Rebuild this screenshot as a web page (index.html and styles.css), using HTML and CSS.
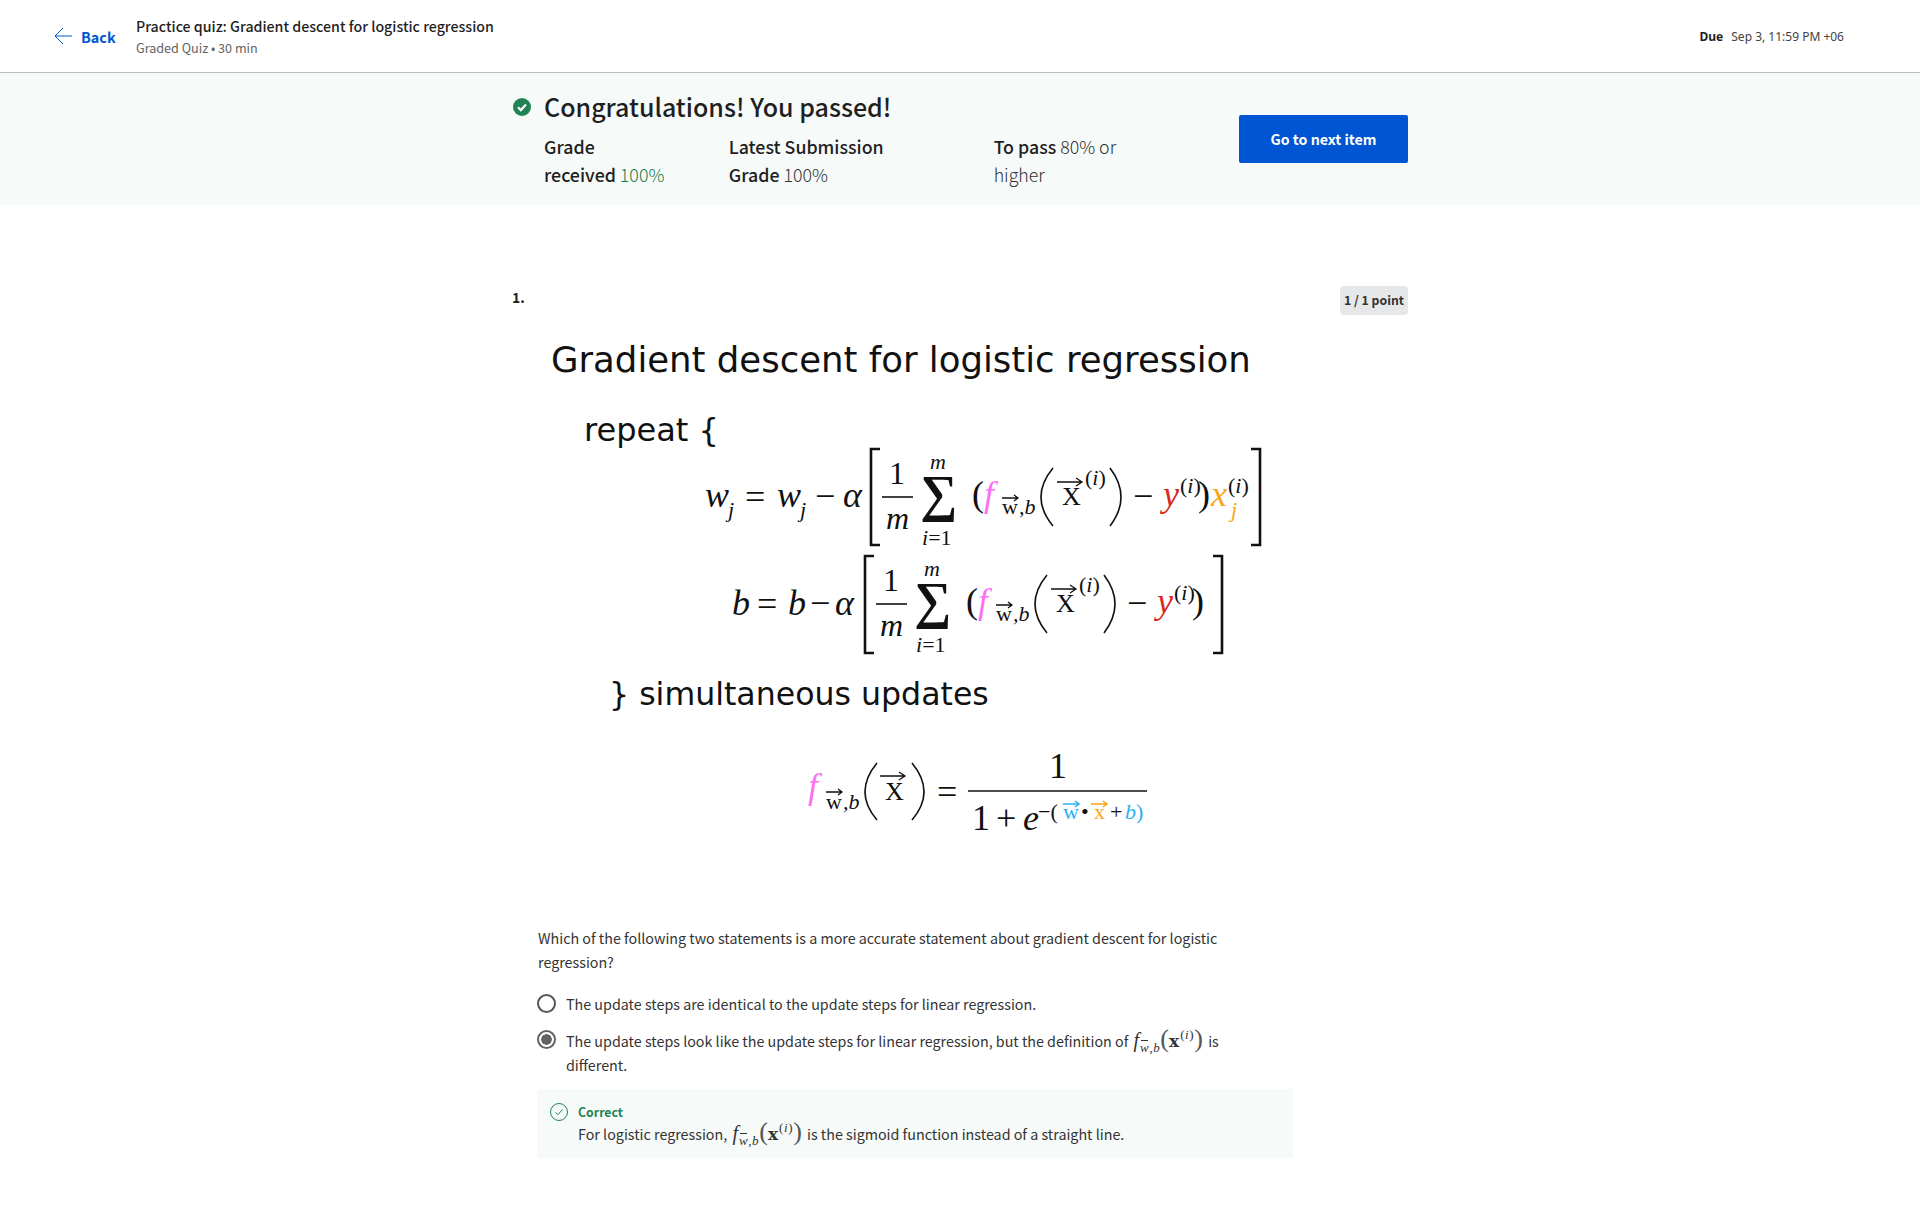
FILE: index.html
```html
<!DOCTYPE html>
<html lang="en">
<head>
<meta charset="utf-8">
<title>Practice quiz: Gradient descent for logistic regression</title>
<link rel="stylesheet" href="styles.css">
</head>
<body>
<header class="topbar">
  <a class="back">
    <svg class="back-icon" viewBox="0 0 18 18" width="18" height="18"><path d="M9 1 1 9l8 8M1 9h17"/></svg>
    <span>Back</span>
  </a>
  <div class="title-block">
    <div class="title">Practice quiz: Gradient descent for logistic regression</div>
    <div class="subtitle">Graded Quiz • 30 min</div>
  </div>
  <div class="due"><b>Due</b><span>Sep 3, 11:59 PM +06</span></div>
</header>

<section class="band">
  <div class="band-inner">
    <div class="result">
      <h1 class="result-head">
        <svg class="ok-icon" viewBox="0 0 18 18" width="18" height="18"><circle cx="9" cy="9" r="9" fill="#1f8354"/><path d="M5 9.3l2.8 2.8L13 6.6" fill="none" stroke="#fff" stroke-width="2.2"/></svg>
        Congratulations! You passed!
      </h1>
      <div class="stats">
        <div class="stat s1"><b>Grade received</b> <span class="green">100%</span></div>
        <div class="stat s2"><b>Latest Submission Grade</b> 100%</div>
        <div class="stat s3"><b>To pass</b> 80% or higher</div>
      </div>
    </div>
    <a class="next-btn">Go to next item</a>
  </div>
</section>

<main class="quiz">
  <div class="q-head">
    <span class="q-num">1.</span>
    <span class="q-points">1 / 1 point</span>
  </div>

  <svg class="figure" viewBox="512 330 896 570" width="896" height="570">
    <text class="vd t1" x="551" y="372">Gradient descent for logistic regression</text>
    <text class="vd t2" x="584" y="441">repeat {</text>

    <g class="math">
      <text class="it" x="705" y="507">w</text><text class="it sm" x="728" y="517">j</text>
      <text x="745" y="509">=</text>
      <text class="it" x="777" y="507">w</text><text class="it sm" x="800" y="517">j</text>
      <text x="815" y="508">−</text>
      <text class="it" x="843" y="507">α</text>
      <path class="br" d="M880 449h-9v96h9M1251 449h9v96h-9"/>
      <text class="fr" x="889" y="484">1</text>
      <path class="ln" d="M882 497h31"/>
      <text class="it fr" x="886" y="529">m</text>
      <text class="sm it" x="930" y="469">m</text>
      <text class="sig" x="920" y="511" textLength="37" lengthAdjust="spacingAndGlyphs">∑</text>
      <text class="sm" x="922" y="545"><tspan class="it">i</tspan>=1</text>
      <text x="972" y="506">(</text>
      <text class="it pink" x="984" y="506">f</text>
      <text class="sm" x="1002" y="514">w<tspan class="it" dx="1">,b</tspan></text>
      <path class="ar" d="M1002 498h16m-4-3 4 3-4 3"/>
      <path class="pa" d="M1053 468q-24 29 0 58M1110 468q22 29 0 58"/>
      <text class="rm" x="1062" y="505">X</text>
      <path class="ar" d="M1057 482h25m-6-4 6 4-6 4"/>
      <text class="sm" x="1085" y="485">(<tspan class="it">i</tspan>)</text>
      <text x="1133" y="508">−</text>
      <text class="it red" x="1163" y="506">y</text>
      <text class="sm" x="1180" y="493">(<tspan class="it">i</tspan>)</text>
      <text x="1198" y="506">)</text>
      <text class="it orange" x="1211" y="506">x</text>
      <text class="sm" x="1228" y="493">(<tspan class="it">i</tspan>)</text>
      <text class="it sm orange" x="1231" y="517">j</text>
    </g>

    <g class="math">
      <text class="it" x="732" y="615">b</text>
      <text x="757" y="616">=</text>
      <text class="it" x="788" y="615">b</text>
      <text x="810" y="615">−</text>
      <text class="it" x="835" y="615">α</text>
      <path class="br" d="M874 556h-9v97h9M1213 556h9v97h-9"/>
      <text class="fr" x="883" y="591">1</text>
      <path class="ln" d="M876 604h31"/>
      <text class="it fr" x="880" y="636">m</text>
      <text class="sm it" x="924" y="576">m</text>
      <text class="sig" x="914" y="618" textLength="37" lengthAdjust="spacingAndGlyphs">∑</text>
      <text class="sm" x="916" y="652"><tspan class="it">i</tspan>=1</text>
      <text x="966" y="613">(</text>
      <text class="it pink" x="978" y="613">f</text>
      <text class="sm" x="996" y="621">w<tspan class="it" dx="1">,b</tspan></text>
      <path class="ar" d="M996 605h16m-4-3 4 3-4 3"/>
      <path class="pa" d="M1047 575q-24 29 0 58M1104 575q22 29 0 58"/>
      <text class="rm" x="1056" y="612">X</text>
      <path class="ar" d="M1051 589h25m-6-4 6 4-6 4"/>
      <text class="sm" x="1079" y="592">(<tspan class="it">i</tspan>)</text>
      <text x="1127" y="615">−</text>
      <text class="it red" x="1157" y="613">y</text>
      <text class="sm" x="1174" y="600">(<tspan class="it">i</tspan>)</text>
      <text x="1192" y="613">)</text>
    </g>

    <text class="vd t3" x="609" y="704.5">} simultaneous updates</text>

    <g class="math">
      <text class="it pink" x="808" y="798">f</text>
      <text class="sm" x="826" y="809">w<tspan class="it" dx="1">,b</tspan></text>
      <path class="ar" d="M826 792h16m-4-3 4 3-4 3"/>
      <path class="pa" d="M877 763q-24 29 0 57M912 763q24 29 0 57"/>
      <text class="rm" x="885" y="800">X</text>
      <path class="ar" d="M880 776h25m-6-4 6 4-6 4"/>
      <text x="937" y="804">=</text>
      <text x="1049" y="778">1</text>
      <path class="ln" d="M968 791h179"/>
      <text x="972" y="830">1</text>
      <text x="996" y="830">+</text>
      <text class="it" x="1023" y="830">e</text>
      <text class="sm" x="1038" y="819">−(</text>
      <text class="sm blue" x="1063" y="819">w</text>
      <path class="ar-b" d="M1063 804h16m-4-3 4 3-4 3"/>
      <text class="sm" x="1081" y="819">•</text>
      <text class="sm orange" x="1094" y="819">x</text>
      <path class="ar-o" d="M1091 804h16m-4-3 4 3-4 3"/>
      <text class="sm" x="1110" y="819">+</text>
      <text class="sm it blue" x="1125" y="819">b</text>
      <text class="sm blue" x="1136" y="819">)</text>
    </g>
  </svg>

  <div class="q-body">
    <p class="prompt">Which of the following two statements is a more accurate statement about gradient descent for logistic regression?</p>
    <div class="option">
      <span class="radio"></span>
      <span class="opt-text">The update steps are identical to the update steps for linear regression.</span>
    </div>
    <div class="option option-sel">
      <span class="radio on"></span>
      <span class="opt-text">The update steps look like the update steps for linear regression, but the definition of
        <span class="fx"><i>f</i><sub><i class="vec">w</i>,<i>b</i></sub><span class="par">(</span><b>x</b><sup>(<i>i</i>)</sup><span class="par">)</span></span> is different.</span>
    </div>
    <div class="feedback">
      <svg class="fb-icon" viewBox="0 0 18 18" width="18" height="18"><circle cx="9" cy="9" r="8.5" fill="none" stroke="#1f8354"/><path d="M5.5 9.3l2.4 2.4 4.6-5.2" fill="none" stroke="#1f8354"/></svg>
      <div class="fb-text">
        <div class="fb-title">Correct</div>
        <div class="fb-line">For logistic regression, <span class="fx"><i>f</i><sub><i class="vec">w</i>,<i>b</i></sub><span class="par">(</span><b>x</b><sup>(<i>i</i>)</sup><span class="par">)</span></span> is the sigmoid function instead of a straight line.</div>
      </div>
    </div>
  </div>
</main>
</body>
</html>
```

FILE: styles.css
```css
* { box-sizing: border-box; }
html, body { margin: 0; background: #fff; }
body {
  font-family: "Noto Sans CJK JP", "Open Sans", sans-serif;
  color: #1f1f1f;
  min-height: 1222px;
}
.topbar {
  height: 73px;
  border-bottom: 1px solid #bdbdbd;
  display: flex;
  align-items: center;
  padding: 0 76px 0 54px;
}
.back {
  display: flex;
  align-items: center;
  gap: 9px;
  width: 82px;
  color: #0056d2;
  font-weight: 700;
  font-size: 14.4px;
}
.back-icon { fill: none; stroke: #0056d2; stroke-width: 1; flex: none; }
.title-block { flex: 1; }
.title { font-size: 14.2px; font-weight: 500; line-height: 22px; }
.subtitle { font-size: 12.6px; color: #636363; line-height: 20px; margin-top: 1px; }
.due { font-family: "Noto Sans", sans-serif; font-size: 12px; color: #424242; display: flex; gap: 8px; }
.due b { color: #1f1f1f; }

.band { height: 132px; background: #f6faf9; }
.band-inner { width: 896px; margin: 0 auto; display: flex; align-items: flex-start; justify-content: space-between; }
.result { width: 640px; padding-top: 15px; }
.result-head {
  position: relative;
  margin: 0;
  padding-left: 32px;
  font-size: 25px;
  font-weight: 500;
  line-height: 36px;
}
.ok-icon { position: absolute; left: 1px; top: 10px; }
.stats { display: flex; margin-top: 8px; padding-left: 32px; }
.stat { font-size: 17.8px; line-height: 28px; font-weight: 300; color: #333; }
.stat b { font-weight: 500; color: #1f1f1f; }
.s1 { width: 186px; padding-right: 62px; }
.s2 { width: 267px; padding-right: 60px; }
.s3 { width: 160px; }
.green { color: #187a4c; }
.next-btn {
  margin-top: 42px;
  width: 169px;
  height: 48px;
  background: #0056d2;
  border-radius: 2px;
  color: #fff;
  font-weight: 700;
  font-size: 14.2px;
  display: flex;
  align-items: center;
  justify-content: center;
}

.quiz { width: 896px; margin: 0 auto; padding-top: 81px; }
.q-head { display: flex; justify-content: space-between; height: 44px; }
.q-num { font-size: 14px; font-weight: 700; line-height: 20px; margin-top: 1px; }
.q-points {
  height: 29px;
  width: 68px;
  background: #e5e7e8;
  border-radius: 4px;
  font-size: 12.3px;
  font-weight: 700;
  line-height: 29px;
  text-align: center;
  color: #333;
}
.figure { display: block; }
.vd { font-family: "DejaVu Sans", sans-serif; fill: #111; }
.t1 { font-size: 35.5px; }
.t2 { font-size: 32px; }
.t3 { font-size: 31.6px; }
.math text { font-family: "Liberation Serif", serif; font-size: 36px; fill: #111; }
.math .sm { font-size: 22px; }
.math .fr { font-size: 32px; }
.math .it, .math tspan.it { font-style: italic; }
.math .rm { font-size: 26px; }
.math .sig { font-size: 52px; font-weight: 700; }
.math .pink { fill: #fb70f5; }
.math .red { fill: #d92a1c; }
.math .orange { fill: #f9a51a; }
.math .blue { fill: #2ab0f5; }
.br { fill: none; stroke: #111; stroke-width: 2.6; }
.ln { fill: none; stroke: #111; stroke-width: 1.6; }
.ar { fill: none; stroke: #111; stroke-width: 1.3; }
.ar-b { fill: none; stroke: #2ab0f5; stroke-width: 1.5; }
.ar-o { fill: none; stroke: #f9a51a; stroke-width: 1.5; }
.pa { fill: none; stroke: #111; stroke-width: 1.6; }

.q-body { width: 756px; margin: 26px 0 0 25px; font-size: 14.3px; color: #333; }
.prompt { margin: 0; line-height: 24px; padding-left: 1px; }
.option { display: flex; align-items: flex-start; gap: 10px; margin-top: 18px; line-height: 24px; }
.option-sel { margin-top: 12px; line-height: 24px; }
.opt-text { max-width: 668px; }
.radio {
  flex: none;
  width: 19px;
  height: 19px;
  margin-top: 2px;
  border: 2px solid #555;
  border-radius: 50%;
  background: #fff;
}
.radio.on { border-color: #636363; background: radial-gradient(circle, #636363 0 5px, #fff 5.5px); }
.fx { font-family: "Liberation Serif", serif; font-size: 20px; white-space: nowrap; margin: 0 2px; }
.fx sub { font-size: 13px; line-height: 0; letter-spacing: 0.6px; margin-left: 1px; }
.fx sup { font-size: 13px; line-height: 0; letter-spacing: 0.6px; margin-left: 1px; }
.fx .par { font-size: 26px; line-height: 0; font-weight: 300; color: #555; }
.fx b { font-family: "DejaVu Serif", serif; font-size: 17px; }
.vec { position: relative; }
.vec::before {
  content: "";
  position: absolute;
  left: 1px;
  right: 1px;
  top: 0;
  height: 1px;
  background: #333;
}
.feedback {
  display: flex;
  gap: 10px;
  margin-top: 12px;
  height: 69px;
  padding: 14px 13px 0;
  background: #f6faf9;
}
.fb-icon { flex: none; }
.fb-title { font-size: 12.3px; font-weight: 700; color: #1f8354; line-height: 18px; }
.fb-line { line-height: 24px; }
```
